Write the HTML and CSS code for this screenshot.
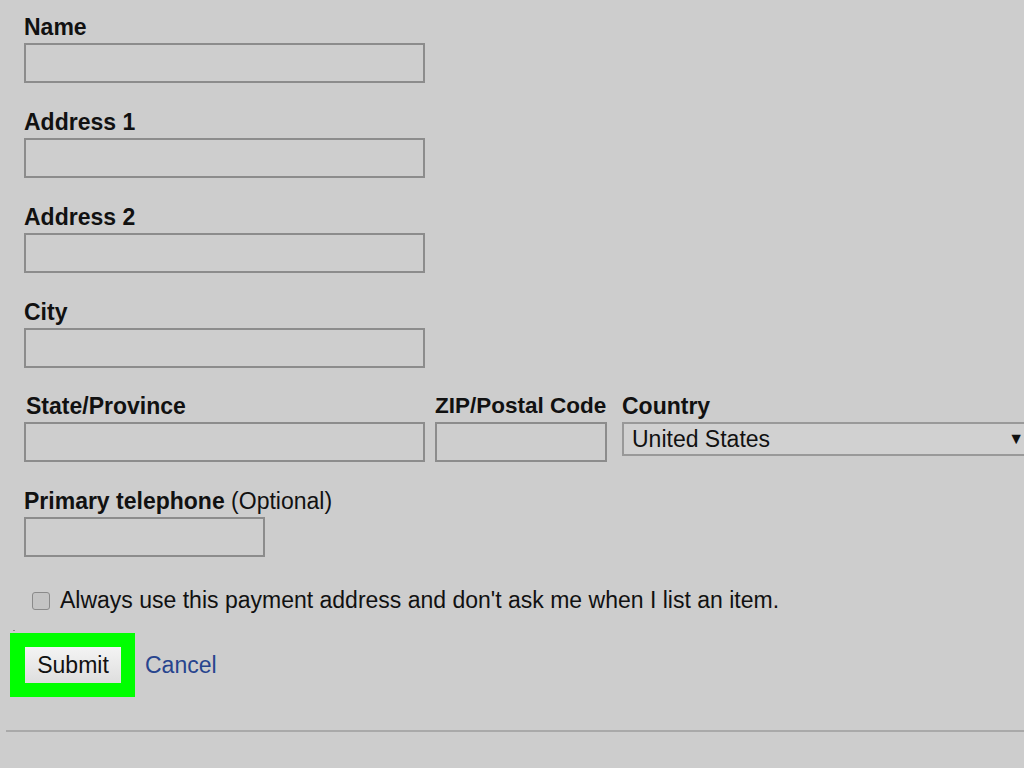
FILE: index.html
```html
<!DOCTYPE html>
<html lang="en">
<head>
    <meta charset="UTF-8">
    <title>Payment Address</title>
    <link rel="stylesheet" href="styles.css">
</head>
<body>
    <form class="address-form">
        <div class="field">
            <label>Name</label>
            <input type="text" class="wide">
        </div>
        <div class="field">
            <label>Address 1</label>
            <input type="text" class="wide">
        </div>
        <div class="field">
            <label>Address 2</label>
            <input type="text" class="wide">
        </div>
        <div class="field">
            <label>City</label>
            <input type="text" class="wide">
        </div>
        <div class="row">
            <div class="field state">
                <label>State/Province</label>
                <input type="text" class="wide">
            </div>
            <div class="field zip">
                <label>ZIP/Postal Code</label>
                <input type="text" class="zip-input">
            </div>
            <div class="field country">
                <label>Country</label>
                <div class="select">
                    <span>United States</span>
                    <span class="arrow">&#9660;</span>
                </div>
            </div>
        </div>
        <div class="field">
            <label>Primary telephone <span class="optional">(Optional)</span></label>
            <input type="text" class="phone">
        </div>
        <div class="check-row">
            <span class="checkbox"></span>
            <span>Always use this payment address and don't ask me when I list an item.</span>
        </div>
        <div class="actions">
            <span class="dot"></span>
            <div class="highlight">
                <button type="button">Submit</button>
            </div>
            <a href="#" class="cancel">Cancel</a>
        </div>
        <hr class="divider">
    </form>
</body>
</html>
```

FILE: styles.css
```css
body {
    margin: 0;
    background: #cdcdcd;
    font-family: "Liberation Sans", Arial, sans-serif;
    color: #111;
    overflow: hidden;
}
.address-form {
    padding: 14px 0 0 24px;
}
.field {
    display: flex;
    flex-direction: column;
    align-items: flex-start;
    margin-bottom: 26px;
}
.field label {
    font-size: 23px;
    font-weight: bold;
    line-height: 26px;
    margin-bottom: 3px;
}
.optional {
    font-weight: normal;
}
input {
    box-sizing: border-box;
    height: 40px;
    background: #cecece;
    border: 2px solid #8c8c8c;
    margin: 0;
}
.wide {
    width: 401px;
}
.zip-input {
    width: 172px;
}
.phone {
    width: 241px;
}
.row {
    display: flex;
    gap: 10px;
    margin-top: -1px;
}
.state label {
    padding-left: 2px;
}
.zip label {
    font-size: 22.5px;
}
.country {
    margin-left: 5px;
}
.select {
    box-sizing: border-box;
    width: 406px;
    height: 34px;
    border: 2px solid #999;
    border-right: none;
    background: #d1d1d1;
    display: flex;
    align-items: center;
    justify-content: space-between;
    padding: 0 4px 0 8px;
    font-size: 23px;
}
.arrow {
    font-size: 16px;
}
.check-row {
    display: flex;
    align-items: center;
    gap: 10px;
    padding-top: 4px;
    margin-left: 8px;
    font-size: 23px;
}
.checkbox {
    width: 16px;
    height: 16px;
    border: 1px solid #8a8a8a;
    border-radius: 3px;
    background: #c4c4c4;
}
.actions {
    position: relative;
    display: flex;
    align-items: center;
    gap: 10px;
    margin: 19px 0 0 -14px;
}
.dot {
    position: absolute;
    left: 3px;
    top: -3px;
    width: 2px;
    height: 1px;
    background: #888;
}
.highlight {
    background: #00ff00;
    padding: 14px 14px 14px 15px;
}
button {
    display: block;
    width: 96px;
    height: 36px;
    border: none;
    background: linear-gradient(#f4f4f4, #dedede);
    font-family: "Liberation Sans", Arial, sans-serif;
    font-size: 23px;
    color: #111;
}
.cancel {
    color: #27448e;
    text-decoration: none;
    font-size: 23px;
}
.divider {
    margin: 33px 0 0 -18px;
    border: none;
    border-top: 2px solid #a9a9a9;
}
```
